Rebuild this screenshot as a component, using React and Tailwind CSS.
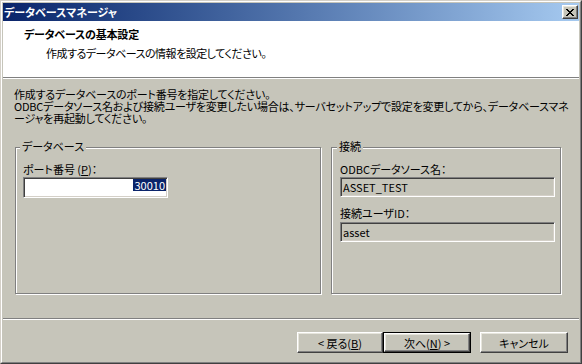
import React from 'react';

const raised =
    'border border-t-white border-l-white border-r-[#404040] border-b-[#404040] shadow-[inset_-1px_-1px_0_#808080,inset_1px_1px_0_#e6e5dc]';
const sunken =
    'border border-t-[#808080] border-l-[#808080] border-r-white border-b-white shadow-[inset_1px_1px_0_#404040,inset_-1px_-1px_0_#d4d0c8]';

function CloseButton() {
    return (
        <div className={`w-[16px] h-[14px] bg-[#c6c5ba] flex items-center justify-center ${raised}`}>
            <svg width="8" height="7" viewBox="0 0 8 7" shapeRendering="crispEdges">
                <path
                    fill="#000"
                    d="M0 0h2v1H0zM6 0h2v1H6zM1 1h2v1H1zM5 1h2v1H5zM2 2h4v1H2zM3 3h2v1H3zM2 4h4v1H2zM1 5h2v1H1zM5 5h2v1H5zM0 6h2v1H0zM6 6h2v1H6z"
                />
            </svg>
        </div>
    );
}

function Separator() {
    return (
        <div className="shrink-0">
            <div className="h-px bg-[#808080]" />
            <div className="h-px bg-white" />
        </div>
    );
}

function Button({ children, primary }) {
    if (primary) {
        return (
            <div className="w-[88px] h-[21px] border border-black">
                <div className={`h-full flex items-center justify-center ${raised}`}>{children}</div>
            </div>
        );
    }
    return <div className={`w-[86px] h-[21px] flex items-center justify-center ${raised}`}>{children}</div>;
}

export default function App() {
    return (
        <div className="w-[582px] h-[364px] bg-[#c6c5ba] text-black text-[11px] leading-[12px] font-['Noto_Sans_CJK_JP',sans-serif] [font-feature-settings:'palt'] border border-t-[#d4d0c8] border-l-[#d4d0c8] border-r-[#404040] border-b-[#404040]">
            <div className="h-full flex flex-col p-px border border-t-white border-l-white border-r-[#808080] border-b-[#808080]">
                {/* Title bar */}
                <div className="h-[18px] shrink-0 flex items-center justify-between pl-[1px] pr-[1px] bg-linear-to-r from-[#0a246a] to-[#a6caf0]">
                    <span className="text-white font-bold">データベースマネージャ</span>
                    <CloseButton />
                </div>

                {/* Header */}
                <div className="h-[56px] shrink-0 bg-white pt-[7px] pl-[21px]">
                    <div className="font-bold tracking-[-0.2px]">データベースの基本設定</div>
                    <div className="mt-[7px] pl-[22px] tracking-[-0.5px]">作成するデータベースの情報を設定してください。</div>
                </div>
                <Separator />

                {/* Body */}
                <div className="flex-1 pt-[9px]">
                    <div className="pl-[11px] whitespace-nowrap tracking-[-0.2px]">
                        <p>作成するデータベースのポート番号を指定してください。</p>
                        <p>ODBCデータソース名および接続ユーザを変更したい場合は、サーバセットアップで設定を変更してから、データベースマネ</p>
                        <p>ージャを再起動してください。</p>
                    </div>

                    <div className="mt-[23px] pl-[12px] flex gap-[10px]">
                        {/* データベース group */}
                        <div className="w-[306px] h-[147px] border border-[#808080] shadow-[inset_1px_1px_0_white,1px_1px_0_white] pl-[7px]">
                            <div className="-mt-[8px] -ml-[3px] w-fit px-[2px] bg-[#c6c5ba]">データベース</div>
                            <div className="mt-[11px]">ポート番号 (<span className="underline">P</span>)：</div>
                            <div className={`mt-[2px] w-[145px] h-[21px] bg-white flex justify-end items-start pt-px pr-px ${sunken}`}>
                                <span className="bg-[#0a246a] text-white px-px">30010</span>
                            </div>
                        </div>

                        {/* 接続 group */}
                        <div className="w-[230px] h-[147px] border border-[#808080] shadow-[inset_1px_1px_0_white,1px_1px_0_white] pl-[8px]">
                            <div className="-mt-[8px] -ml-[3px] w-fit px-[2px] bg-[#c6c5ba]">接続</div>
                            <div className="mt-[11px]">ODBCデータソース名：</div>
                            <div className={`mt-[2px] w-[215px] h-[20px] flex items-center pl-[2px] ${sunken}`}>ASSET_TEST</div>
                            <div className="mt-[10px]">接続ユーザID：</div>
                            <div className={`mt-[3px] w-[215px] h-[20px] flex items-center pl-[2px] ${sunken}`}>asset</div>
                        </div>
                    </div>
                </div>
                <Separator />

                {/* Buttons */}
                <div className="h-[41px] shrink-0 pt-[12px] pr-[11px] flex justify-end items-start">
                    <Button>&lt; 戻る(<span className="underline">B</span>)</Button>
                    <Button primary>次へ(<span className="underline">N</span>) &gt;</Button>
                    <div className="ml-[9px]">
                        <div className={`w-[88px] h-[21px] flex items-center justify-center ${raised}`}>キャンセル</div>
                    </div>
                </div>
            </div>
        </div>
    );
}
